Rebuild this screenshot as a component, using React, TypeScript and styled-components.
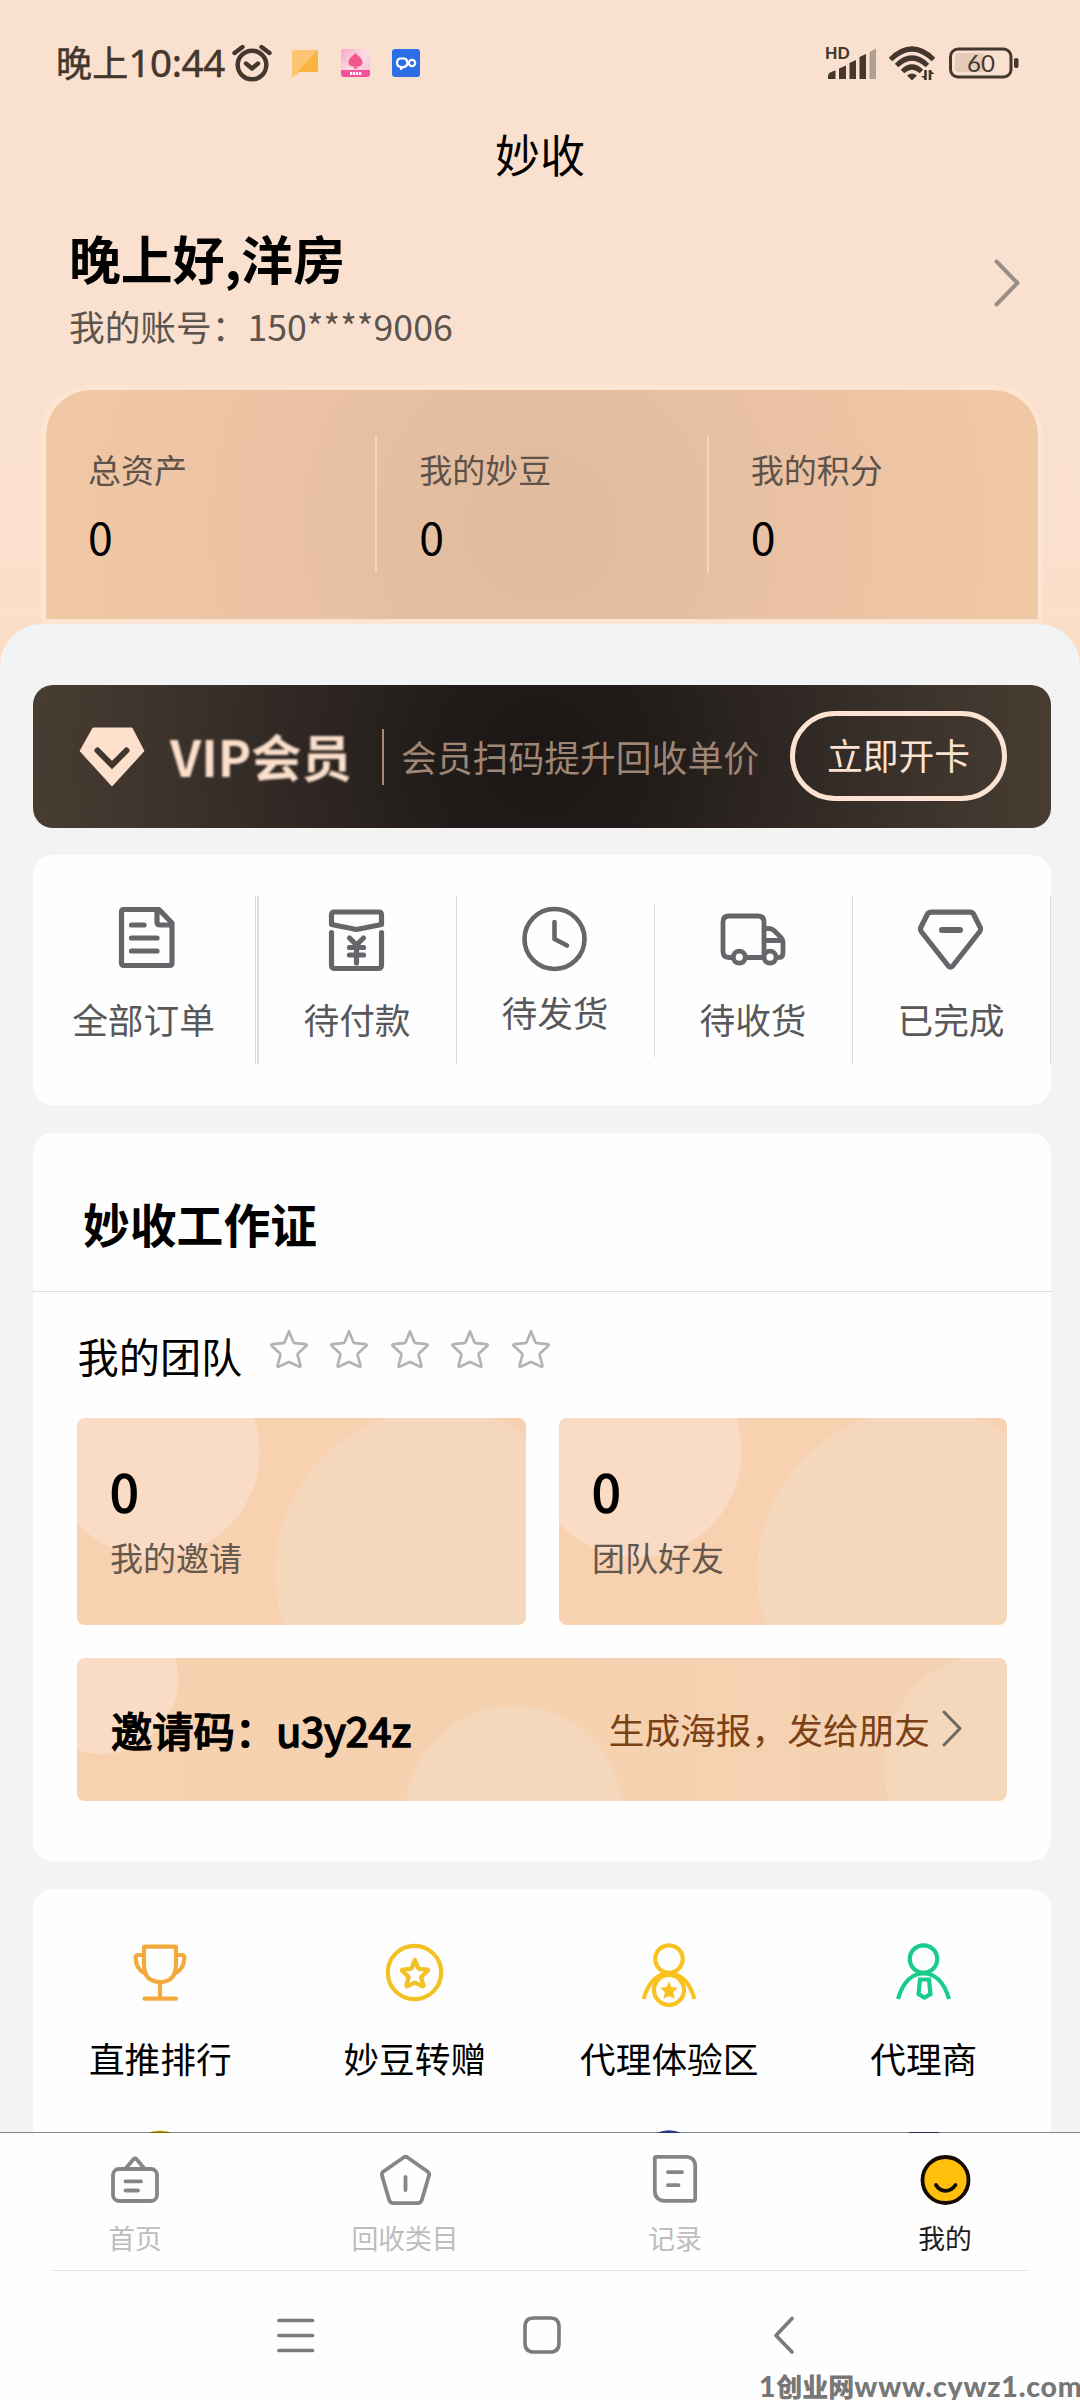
import React from 'react';
import styled, { createGlobalStyle, css } from 'styled-components';

const Global = createGlobalStyle`
  * { box-sizing: border-box; }
  body { margin: 0; background: #fff; font-family: "Noto Sans CJK SC", "Noto Sans", sans-serif; }
  svg { display: block; flex: none; }
`;

const Page = styled.div`
  position: relative;
  width: 1080px;
  height: 2400px;
  overflow: hidden;
  display: flex;
  flex-direction: column;
  background: #fefefe;
  color: #000;
`;

const Main = styled.main`
  height: 2133px;
  flex: none;
  overflow: hidden;
  display: flex;
  flex-direction: column;
  background: linear-gradient(#fae1cf 0, #fae1cf 400px, #fae0cb 600px, #fcdcc3 660px);
`;

/* ---------- status bar ---------- */

const StatusBar = styled.div`
  height: 126px;
  flex: none;
  display: flex;
  align-items: center;
  justify-content: space-between;
  padding: 0 61px 0 56px;
  color: #43372e;
`;

const StatusGroup = styled.div<{ $gap: number }>`
  display: flex;
  align-items: center;
  gap: ${(p) => p.$gap}px;
`;

const Clock = styled.span`
  font-size: 36px;
  line-height: 50px;
  letter-spacing: 0.2px;
  margin: -3px -13px 0 0;
  -webkit-text-stroke: 0.5px #43372e;
  span { font-family: "Noto Sans", "Noto Sans CJK SC", sans-serif; font-size: 38.5px; letter-spacing: -0.4px; }
`;

const BatteryText = styled.text`
  font: 400 24px Lato, sans-serif;
`;

const HdText = styled.text`
  font: 900 16px Lato, sans-serif;
`;

/* ---------- header ---------- */

const TitleBar = styled.h1`
  margin: 0;
  height: 55px;
  flex: none;
  line-height: 55px;
  text-align: center;
  font-size: 45px;
  font-weight: 400;
`;

const Profile = styled.section`
  display: flex;
  justify-content: space-between;
  padding: 47px 58px 0 69px;
  svg { margin-top: 29px; }
`;

const Greeting = styled.h2`
  margin: 0 0 14px;
  font-size: 51.84px;
  line-height: 60px;
  font-weight: 700;
`;

const Account = styled.p`
  margin: 0;
  font-size: 35.7px;
  line-height: 48px;
  color: #5d544e;
`;

const Assets = styled.section`
  display: flex;
  flex: none;
  height: 239px;
  margin: 35px 37px 0 41px;
  border: 5px solid #fde5d3;
  border-radius: 50px 50px 0 0;
  background: radial-gradient(circle 510px at 50% 60%, #e0bb9c 0, #e2bda0 18%, #e8c0a2 40%, #edc5a5 70%, #f0c8a4 100%);
  background-clip: padding-box;
  background-color: #fde5d3;
`;

const AssetCell = styled.div`
  flex: 1;
  padding: 59px 0 0 42px;
`;

const AssetRule = styled.i`
  width: 2px;
  height: 137px;
  margin-top: 46px;
  background: #fbd4b7;
`;

const AssetLabel = styled.div`
  font-size: 33px;
  line-height: 40px;
  color: #5e5249;
`;

const AssetValue = styled.div`
  margin-top: 22px;
  font-size: 44.6px;
  line-height: 50px;
`;

/* ---------- sheet ---------- */

const Sheet = styled.div`
  flex: 1;
  min-height: 0;
  display: flex;
  flex-direction: column;
  padding: 61px 29px 0 33px;
  border-radius: 42px 42px 0 0;
  background: linear-gradient(#f1f3f5 0, #f1f3f5 50px, #f3f3f3 110px);
`;

const Vip = styled.section`
  height: 143px;
  flex: none;
  display: flex;
  align-items: center;
  padding: 0 44px 0 46px;
  border-radius: 20px;
  background: radial-gradient(circle 530px at 50% 50%, #1c1716 0, #211c19 20%, #2f2723 46%, #3c332c 72%, #4a3e32 100%);
`;

const VipName = styled.strong`
  margin: -3px 0 0 25px;
  width: 212px;
  font-size: 50.3px;
  line-height: 60px;
  font-weight: 700;
  white-space: nowrap;
  color: #fbdfcb;
  filter: blur(0.8px);
`;

const VipRule = styled.i`
  width: 2px;
  height: 56px;
  background: #a48976;
`;

const VipHint = styled.span`
  margin: -2px 0 0 17px;
  font-size: 35.8px;
  line-height: 48px;
  white-space: nowrap;
  color: #9f8574;
`;

const VipButton = styled.button`
  margin: -1px 0 0 auto;
  padding: 0 0 4px;
  width: 217px;
  height: 90px;
  border: 5px solid #fce2d0;
  border-radius: 45px;
  background: none;
  font: inherit;
  font-size: 35.8px;
  white-space: nowrap;
  color: #fce2d0;
`;

const card = css`
  flex: none;
  border-radius: 20px;
  background: #fefefe;
`;

const Orders = styled.section`
  ${card}
  height: 250px;
  margin-top: 27px;
  display: flex;
  align-items: center;
`;

const Order = styled.div<{ $wide?: boolean; $short?: boolean }>`
  width: ${(p) => (p.$wide ? 223 : 198)}px;
  height: ${(p) => (p.$short ? 153 : 168)}px;
  padding-top: ${(p) => (p.$short ? 0 : 7)}px;
  padding-right: 1px;
  display: flex;
  flex-direction: column;
  align-items: center;
  gap: ${(p) => (p.$short ? 12 : 20)}px;
  border-right: 1px solid #d9d9d9;
`;

const OrderGap = styled.i`
  width: 2px;
  height: 168px;
  margin-left: 1px;
  background: #dedede;
`;

const OrderLabel = styled.span`
  font-size: 35.7px;
  line-height: 48px;
  color: #58585a;
`;

/* ---------- work pass ---------- */

const Work = styled.section`
  ${card}
  height: 728px;
  margin-top: 28px;
`;

const WorkTitle = styled.h3`
  margin: 0;
  height: 159px;
  padding: 60px 0 0 50px;
  border-bottom: 1px solid #dcdcdc;
  font-size: 46.8px;
  line-height: 60px;
  font-weight: 700;
`;

const Team = styled.div`
  display: flex;
  height: 126px;
  padding: 38px 0 0 44.5px;
`;

const TeamLabel = styled.span`
  width: 171.5px;
  font-size: 41.2px;
  line-height: 50px;
`;

const Stars = styled.div`
  display: flex;
  gap: 16.5px;
  margin-top: -2px;
  padding-left: 17.5px;
`;

const TeamCards = styled.div`
  display: grid;
  grid-template-columns: 449px 448px;
  gap: 33px;
  padding-left: 44px;
`;

const TeamCard = styled.div`
  height: 207px;
  padding: 42px 0 0 33px;
  border-radius: 8px;
  background:
    radial-gradient(circle at 77.5px 34px, #fadcc6 104.5px, transparent 105.5px),
    radial-gradient(circle at 362px 155px, #f5d8bc 163.5px, transparent 164.5px),
    #f7d1b0;
`;

const TeamValue = styled.div`
  font-size: 51.5px;
  line-height: 60px;
  -webkit-text-stroke: 1.7px #000;
`;

const TeamText = styled.div`
  margin-top: 17px;
  font-size: 33px;
  line-height: 40px;
  color: #64574e;
`;

const Invite = styled.div`
  margin: 33px 44px 0;
  height: 143px;
  display: flex;
  align-items: center;
  padding: 0 45px 0 34px;
  border-radius: 8px;
  background:
    radial-gradient(circle at 25px 20px, #fadcc6 75.5px, transparent 76.5px),
    radial-gradient(circle at 437px 156.5px, #f5d8bc 108px, transparent 109px),
    radial-gradient(circle at 920px 107px, #f5d8bc 112.5px, transparent 113.5px),
    linear-gradient(90deg, #f7d1b0, #f4d2b1);
`;

const InviteCode = styled.strong`
  margin-top: -2px;
  font-size: 41.3px;
  line-height: 50px;
  font-weight: 400;
  -webkit-text-stroke: 1.7px #000;
`;

const InviteLink = styled.span`
  margin: -2px 12px 0 auto;
  font-size: 35.7px;
  line-height: 48px;
  color: #7c4015;
`;

/* ---------- menu ---------- */

const Menu = styled.section`
  ${card}
  flex: 1 0 auto;
  height: 420px;
  margin-top: 28px;
  display: grid;
  grid-template-columns: repeat(4, 1fr);
  grid-auto-rows: 187px;
  padding-top: 48px;
`;

const MenuItem = styled.div`
  display: flex;
  flex-direction: column;
  align-items: center;
  gap: 17px;
`;

const MenuLabel = styled.span`
  font-size: 35.7px;
  line-height: 48px;
`;

/* ---------- bottom ---------- */

const TabBar = styled.nav`
  position: relative;
  flex: none;
  display: grid;
  grid-template-columns: repeat(4, 1fr);
  height: 138px;
  margin-top: -1px;
  border-top: 1px solid rgba(40, 42, 48, 0.55);
  background: #fefefe;
  background-clip: padding-box;
`;

const Tab = styled.div<{ $active?: boolean }>`
  display: flex;
  flex-direction: column;
  align-items: center;
  padding-top: 19px;
  gap: 12px;
  font-size: 26.8px;
  line-height: 40px;
  color: ${(p) => (p.$active ? '#1d1d1d' : '#bdbdbd')};
`;

const SystemNav = styled.div`
  flex: 1;
  margin: 0 52px;
  border-top: 1px solid #e0e0e0;
  display: flex;
  justify-content: space-between;
  padding: 43px 228px 0 223px;
`;

const Watermark = styled.div`
  position: absolute;
  left: 759px;
  bottom: -1px;
  display: flex;
  align-items: baseline;
  font: 900 28.5px/28px Lato, "Noto Sans CJK SC", sans-serif;
  letter-spacing: 0.8px;
  white-space: nowrap;
  color: #777;
  b { font-size: 26px; line-height: 28px; font-weight: 900; letter-spacing: 0; }
`;

const STAR = 'M20 3.2 L24.4 14.2 Q24.8 15 25.8 15.1 L36.6 16.2 Q38.4 16.6 37.1 18 L29 25.6 Q28.5 26.1 28.6 27 L31.4 37.4 Q31.6 39.2 30 38.6 L20.8 34.2 Q20 33.8 19.2 34.2 L10 38.6 Q8.4 39.2 8.6 37.4 L11.4 27 Q11.5 26.1 11 25.6 L2.9 18 Q1.6 16.6 3.4 16.2 L14.2 15.1 Q15.2 15 15.6 14.2 Z';

const Line = ({ w, h, sw, color, children }: { w: number; h: number; sw: number; color: string; children: React.ReactNode }) => (
  <svg width={w} height={h} viewBox={`0 0 ${w} ${h}`} fill="none" stroke={color} strokeWidth={sw} strokeLinecap="round" strokeLinejoin="round">
    {children}
  </svg>
);

const G = '#65666a';

const orders = [
  {
    label: '全部订单', wide: true,
    icon: (
      <Line w={72} h={72} sw={5.2} color={G}>
        <path d="M16 6.500H51L64 20V60Q64 62.500 61.500 62.500H16Q13.500 62.500 13.500 60V9Q13.500 6.500 16 6.500Z" />
        <path d="M49 7V19Q49 22 52 22H63M23.500 22H36M23.500 35H49M23.500 48H49" />
      </Line>
    ),
  },
  {
    label: '待付款',
    icon: (
      <Line w={72} h={72} sw={5.2} color={G}>
        <path d="M13 9H58Q60.500 9 60.500 12V21.500L35.500 26.500L10.500 21.500V12Q10.500 9 13 9Z" />
        <path d="M10.500 29.500V62Q10.500 65.500 14 65.500H57Q60.500 65.500 60.500 62V29.500" />
        <path d="M28.500 35L35.500 42L42.500 35M28.500 44.500H42.500M28.500 52H42.500M35.500 43V60" />
      </Line>
    ),
  },
  {
    label: '待发货', short: true,
    icon: (
      <Line w={72} h={72} sw={4.6} color={G}>
        <circle cx="35.500" cy="35" r="30" />
        <path d="M35.500 18V35L48 41.500" />
      </Line>
    ),
  },
  {
    label: '待收货',
    icon: (
      <Line w={72} h={72} sw={4.8} color={G}>
        <path d="M15.500 54.500H12Q6 54.500 6 48.500V19Q6 13 12 13H41Q47 13 47 19V54.500H23" />
        <path d="M47 25.500H52Q55 25.500 57 27.500L64.500 35Q66 36.700 66 39.500V49.500Q66 54.500 62 54.500M48 37.500H65" />
        <circle cx="22.300" cy="54.200" r="6" fill="#fefefe" />
        <circle cx="53" cy="54.200" r="6" fill="#fefefe" />
      </Line>
    ),
  },
  {
    label: '已完成',
    icon: (
      <Line w={72} h={72} sw={5.2} color={G}>
        <path d="M17 9.200H54.500Q58 9.200 59 12L65.500 25Q66 27 64.800 28.500L38 62.500Q35.500 66 33 62.500L6.200 28.500Q5 27 5.500 25L12 12Q13 9.200 17 9.200Z" />
        <path d="M27 27H45" strokeWidth="6" />
      </Line>
    ),
  },
];

const menu = [
  {
    label: '直推排行',
    icon: (
      <Line w={66} h={80} sw={4.2} color="#f2aa3c">
        <path d="M17.500 9.600H48Q49 9.600 49 11V27Q49 45 33 45Q17 45 17 27V11Q17 9.600 17.500 9.600ZM33 45V61.500M17.500 61.700H49" />
        <path d="M17 18H11Q8.500 18 8.700 21Q9 32 17.500 36M49 18H55Q57.500 18 57.300 21Q57 32 48.500 36" />
      </Line>
    ),
  },
  {
    label: '妙豆转赠',
    icon: (
      <Line w={66} h={80} sw={4.2} color="#f2c124">
        <circle cx="32.500" cy="35.500" r="26.700" />
        <path transform="translate(18.100 20.600) scale(.74)" d={STAR} strokeWidth="5.800" />
      </Line>
    ),
  },
  {
    label: '代理体验区',
    icon: (
      <Line w={66} h={80} sw={4.2} color="#fac21f">
        <circle cx="33" cy="22" r="13.700" />
        <path d="M7.500 62Q15 36.500 33 36.500Q51 36.500 58.500 62" strokeLinecap="butt" />
        <circle cx="33" cy="53" r="15" fill="#fefefe" />
        <path transform="translate(23.800 43.300) scale(.46)" d={STAR} fill="#fac21f" strokeWidth="1" />
      </Line>
    ),
  },
  {
    label: '代理商',
    icon: (
      <Line w={66} h={80} sw={4.2} color="#18cd8b">
        <circle cx="32.500" cy="22" r="13.700" />
        <path d="M7 62Q14.500 36.500 32.500 36.500Q50.500 36.500 58 62" strokeLinecap="butt" />
        <path d="M29 42.500H38L39.500 57L33.500 60.500L27.500 57Z" strokeLinejoin="miter" />
      </Line>
    ),
  },
  { label: '', icon: <Line w={66} h={80} sw={4} color="#c8a600"><circle cx="33" cy="35.500" r="27" /></Line> },
  { label: '', icon: <svg width={66} height={80} /> },
  { label: '', icon: <Line w={66} h={80} sw={4} color="#2c3f9e"><circle cx="33" cy="35.300" r="27" /></Line> },
  { label: '', icon: <Line w={66} h={80} sw={4} color="#2b3264"><path d="M19 10H47V50H19Z" /></Line> },
];

const T = '#85868a';

const tabs = [
  {
    label: '首页',
    icon: (
      <Line w={54} h={54} sw={3.8} color={T}>
        <rect x="5" y="17" width="44" height="32" rx="6" />
        <path d="M18 16L25.500 7.200Q27 5.700 28.500 7.200L36 16M17.500 29.300H33M17.500 38.500H30" />
      </Line>
    ),
  },
  {
    label: '回收类目',
    icon: (
      <Line w={54} h={54} sw={3.8} color={T}>
        <path d="M25.500 5.500Q27.500 4 29.500 5.500L49.500 19.500Q51.700 21 51 23.500L44 47.500Q43 51.200 39.500 51.200H15.500Q12 51.200 11 47.500L4 23.500Q3.300 21 5.500 19.500Z" />
        <path d="M27.500 25V38" />
      </Line>
    ),
  },
  {
    label: '记录',
    icon: (
      <Line w={54} h={54} sw={3.8} color={T}>
        <path d="M8 4.800H39Q47 5.500 47.200 14V46.500Q47.200 48.800 45 48.800H16Q7 48 6.800 39V6.500Q6.800 4.800 8 4.800ZM20 20.200H34M20 33.200H30.500" />
      </Line>
    ),
  },
  {
    label: '我的', active: true,
    icon: (
      <Line w={54} h={54} sw={3.800} color="#140a00">
        <circle cx="27.500" cy="28" r="23" fill="#ffbf0b" />
        <path d="M18 33Q21.500 38.800 27.500 38.800Q33.500 38.800 37.500 33" />
      </Line>
    ),
  },
];

export default function App() {
  return (
    <Page>
      <Global />
      <Main>
        <StatusBar>
          <StatusGroup $gap={20}>
            <Clock>晚上<span>10:44</span></Clock>
            <Line w={40} h={40} sw={4.4} color="#43372e">
              <circle cx="20" cy="22" r="14.300" />
              <path d="M14 20.500L20 25.500L26 20.500M2.500 10L10.500 4M37.500 10L29.500 4" />
            </Line>
            <svg width="26" height="30" viewBox="0 0 26 30">
              <path d="M2 2H24Q26 2 26 4V22Q26 24 24 24H8L0 30V4Q0 2 2 2Z" fill="#fdc571" />
              <path d="M25.500 2.500L5 24H24Q26 24 26 22V4Z" fill="#fbb441" />
            </svg>
            <svg width="32" height="28" viewBox="-3 0 32 28">
              <defs>
                <linearGradient id="pink" x1="0" y1="0" x2="1" y2="1">
                  <stop offset="0" stopColor="#f9a6c4" />
                  <stop offset=".5" stopColor="#fbdde4" />
                  <stop offset="1" stopColor="#f9b7cd" />
                </linearGradient>
              </defs>
              <rect width="29" height="28" rx="3" fill="url(#pink)" />
              <path d="M14.500 4C17 6.500 21.500 9 21.500 13.500C21.500 17 17 18.500 15.500 17L16.500 19.500H12.500L13.500 17C12 18.500 7.500 17 7.500 13.500C7.500 9 12 6.500 14.500 4Z" fill="#f4578d" />
              <path d="M0 21H29V25Q29 28 26 28H3Q0 28 0 25Z" fill="#f7519c" />
              <path d="M9 24.500H20.500" stroke="#fff" strokeWidth="3" strokeDasharray="2.200 .8" />
            </svg>
            <svg width="30" height="28" viewBox="-2 0 30 28" fill="none" stroke="#fff" strokeWidth="2.200" strokeLinecap="round" strokeLinejoin="round">
              <rect width="28" height="28" rx="3" fill="#2c6ee8" stroke="none" />
              <path d="M8 9.500H12.500Q15.500 10.500 15.500 14Q15 18 11 18L9 20V18Q5 17.500 5 13.500Q5.200 10 8 9.500Z" />
              <circle cx="20" cy="14" r="3.200" />
              <path d="M15.500 13L17 14" />
            </svg>
          </StatusGroup>
          <StatusGroup $gap={13}>
            <svg width="51" height="36" viewBox="0 0 51 36" fill="#43372e">
              <HdText x="0" y="14.300">HD</HdText>
              <path d="M3 31Q3 27 10.500 25.500V34H3ZM14 34V23.500L21 20.500V34ZM24.500 34V18L31 15V34ZM34.500 34V12L41 9V34Z" />
              <path d="M44.500 34V7L51 3.500V34Z" fill="#b0a093" />
            </svg>
            <svg width="46" height="36" viewBox="0 0 46 36" fill="none" stroke="#43372e" strokeWidth="5">
              <path d="M1.500 14.500Q23 -6.500 44.500 14.500M7.500 20.500Q23 5.500 38.500 20.500M13.500 26.500Q23 17.500 32.500 26.500" />
              <path d="M18 30.500Q23 26.500 28 30.500L23 35.500Z" fill="#43372e" stroke="none" />
              <path d="M36.500 25V35M41 35V25" strokeWidth="2.600" />
              <path d="M32 31H37V35ZM45.500 29H41V25Z" fill="#43372e" stroke="none" />
            </svg>
            <svg width="71" height="34" viewBox="0 0 71 34" fill="#43372e">
              <rect x="7" y="7" width="30" height="19" rx="3" fill="#e6cbb8" />
              <rect x="2.500" y="3" width="60.500" height="28" rx="7.500" fill="none" stroke="#43372e" strokeWidth="3" />
              <rect x="66" y="12" width="4.500" height="10" rx="2" />
              <BatteryText x="19" y="25.500">60</BatteryText>
            </svg>
          </StatusGroup>
        </StatusBar>

        <TitleBar>妙收</TitleBar>

        <Profile>
          <div>
            <Greeting>晚上好,洋房</Greeting>
            <Account>我的账号：150****9006</Account>
          </div>
          <Line w={30} h={52} sw={4} color="#998e88">
            <path d="M4.500 4.500L25.500 26L4.500 47.500" />
          </Line>
        </Profile>

        <Assets>
          <AssetCell><AssetLabel>总资产</AssetLabel><AssetValue>0</AssetValue></AssetCell>
          <AssetRule />
          <AssetCell><AssetLabel>我的妙豆</AssetLabel><AssetValue>0</AssetValue></AssetCell>
          <AssetRule />
          <AssetCell><AssetLabel>我的积分</AssetLabel><AssetValue>0</AssetValue></AssetCell>
        </Assets>

        <Sheet>
          <Vip>
            <svg width="66" height="60" viewBox="0 0 66 60">
              <path d="M14 1H53L65 24L33 59L1 24Z" fill="#fde0cc" stroke="#fde0cc" strokeLinejoin="round" />
              <path d="M18.500 23.500L33 38L47.500 23.500" fill="none" stroke="#40362d" strokeWidth="6" strokeLinecap="round" />
            </svg>
            <VipName>VIP会员</VipName>
            <VipRule />
            <VipHint>会员扫码提升回收单价</VipHint>
            <VipButton>立即开卡</VipButton>
          </Vip>

          <Orders>
            {orders.map((o) => (
              <React.Fragment key={o.label}>
                <Order $wide={o.wide} $short={o.short}>
                  {o.icon}
                  <OrderLabel>{o.label}</OrderLabel>
                </Order>
                {o.wide && <OrderGap />}
              </React.Fragment>
            ))}
          </Orders>

          <Work>
            <WorkTitle>妙收工作证</WorkTitle>
            <Team>
              <TeamLabel>我的团队</TeamLabel>
              <Stars>
                {[0, 1, 2, 3, 4].map((i) => (
                  <svg key={i} width="44" height="42" viewBox="-2 0 44 42" fill="none" stroke="#b3b3b3" strokeWidth="2.700" strokeLinejoin="round">
                    <path d={STAR} />
                  </svg>
                ))}
              </Stars>
            </Team>
            <TeamCards>
              <TeamCard><TeamValue>0</TeamValue><TeamText>我的邀请</TeamText></TeamCard>
              <TeamCard><TeamValue>0</TeamValue><TeamText>团队好友</TeamText></TeamCard>
            </TeamCards>
            <Invite>
              <InviteCode>邀请码：u3y24z</InviteCode>
              <InviteLink>生成海报，发给朋友</InviteLink>
              <Line w={20} h={40} sw={3} color="#6b6966">
                <path d="M2 2L18 18.500L2 35" />
              </Line>
            </Invite>
          </Work>

          <Menu>
            {menu.map((m, i) => (
              <MenuItem key={i}>
                {m.icon}
                <MenuLabel>{m.label}</MenuLabel>
              </MenuItem>
            ))}
          </Menu>
        </Sheet>
      </Main>

      <TabBar>
        {tabs.map((t) => (
          <Tab key={t.label} $active={t.active}>
            {t.icon}
            {t.label}
          </Tab>
        ))}
      </TabBar>

      <SystemNav>
        <Line w={42} h={44} sw={3.700} color="#7b7b7b">
          <path d="M4 6.500H37.500M4 21.500H37.500M4 36.500H37.500" />
        </Line>
        <Line w={42} h={44} sw={3.600} color="#7b7b7b">
          <path d="M10 4H27.500Q36 4 36 13V29Q36 38 27.500 38H10.500Q2 38 2 29V13Q2 4 10.500 4Z" />
        </Line>
        <Line w={30} h={44} sw={3.700} color="#7b7b7b">
          <path d="M22 4.500L6 21.500L22 38" />
        </Line>
      </SystemNav>

      <Watermark>1<b>创业网</b>www.cywz1.com</Watermark>
    </Page>
  );
}
